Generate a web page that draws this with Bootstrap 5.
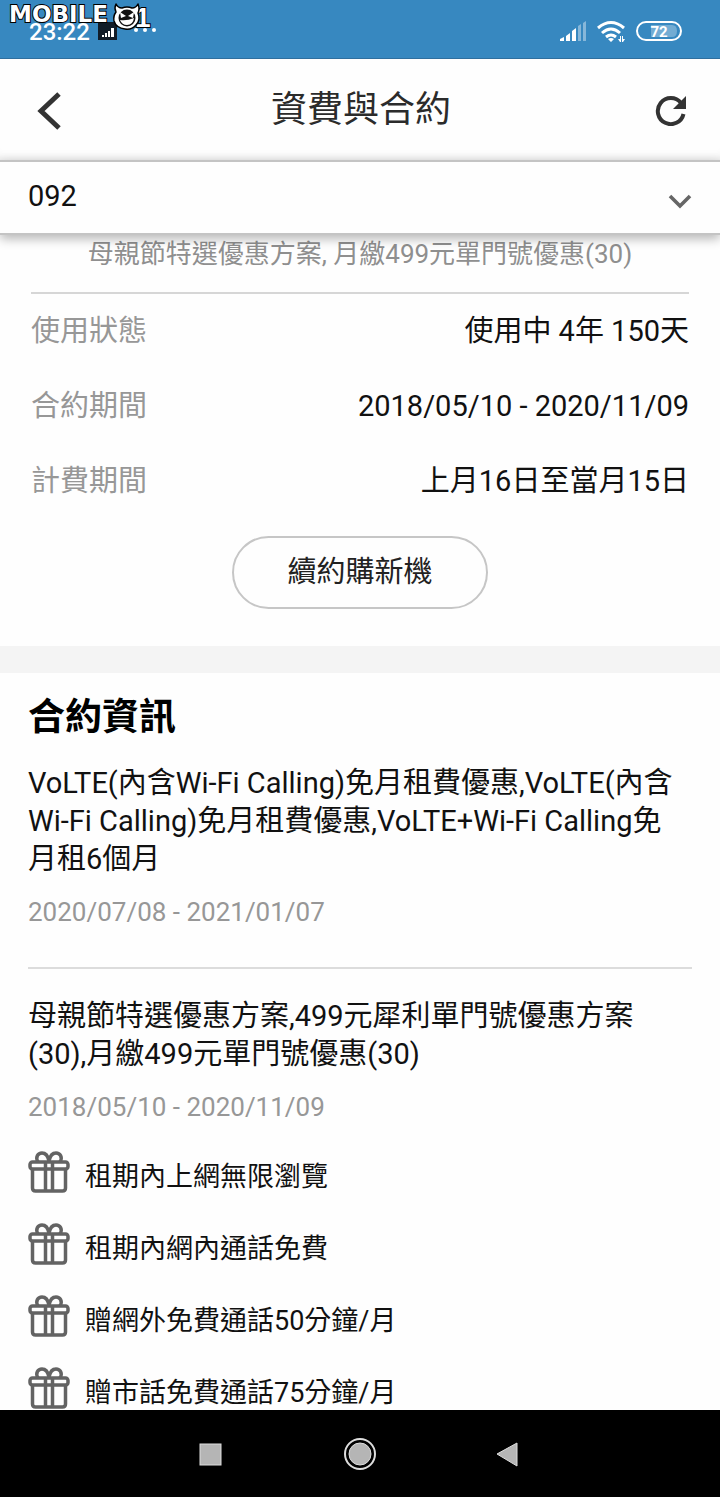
<!DOCTYPE html>
<html lang="zh-Hant">
<head>
<meta charset="utf-8">
<meta name="viewport" content="width=device-width, initial-scale=1">
<title>資費與合約</title>
<link href="https://cdn.jsdelivr.net/npm/bootstrap@5.3.0/dist/css/bootstrap.min.css" rel="stylesheet">
<style>
body { font-family: Roboto, "Noto Sans CJK TC", sans-serif; font-size: 29px; line-height: 38px; color: #111; background: #fefefe; }
svg { display: block; flex: none; }
.status-bar { height: 59px; background: #3788c0; border-bottom: 1px solid #2f6f9e; color: #fff; padding: 4px 38px 0 29px; }
.clock { font-size: 24px; line-height: 24px; font-weight: 500; padding-top: 2px; }
.watermark { top: 0; left: 8px; }
.title-bar { height: 101px; padding: 0 32px; box-shadow: inset 0 -10px 10px -8px #e8e8e8; }
.title-bar h1 { font-size: 36px; line-height: 54px; color: #2b2b2b; }
.line-select { height: 75px; padding: 0 28px 4px; border: solid #c4c4c4; border-width: 2px 0; font-size: 29px; line-height: 38px; color: #111; background: #fefefe url("data:image/svg+xml,%3Csvg xmlns='http://www.w3.org/2000/svg' viewBox='0 0 24 16'%3E%3Cpath d='M2 3l10 10L22 3' fill='none' stroke='%23666' stroke-width='3.6'/%3E%3C/svg%3E") no-repeat right 28px top 31px / 24px 16px; box-shadow: 0 4px 10px rgba(0,0,0,.28); }
.usage { padding: 0 31px 37px; }
.plan-name { font-size: 26px; color: #8f8f8f; padding-bottom: 19px; border-bottom: 2px solid #d6d6d6; }
.usage dl { padding-top: 18px; }
.usage dl > div { padding-bottom: 37px; }
.usage dl > div:last-child { padding-bottom: 36px; }
.usage dt { color: #979797; font-weight: 400; }
.renew { width: 256px; height: 73px; font-size: 29px; color: #222; border: 2px solid #c6c6c6; }
.band { height: 27px; background: #f4f4f4; }
.contracts { padding: 18px 28px 0; }
.contracts h2 { font-size: 37px; line-height: 54px; font-weight: 700; color: #000; margin-bottom: 19px; }
.contract-name { padding-right: 8px; }
.period { font-size: 26px; color: #979797; padding-top: 15px; }
.contract + .contract { border-top: 2px solid #dcdcdc; margin-top: 36px; padding-top: 28px; }
.perk { font-size: 27px; line-height: 34px; padding-bottom: 38px; gap: 15px; }
.perks { padding-top: 34px; }
.perks .perk:last-child { padding-bottom: 0; }
.nav-keys { height: 87px; background: #000; }
.nav-keys .btn { line-height: 1; }
</style>
</head>
<body class="d-flex flex-column min-vh-100">
<svg class="d-none" aria-hidden="true">
  <symbol id="gift" viewBox="0 0 42 42"><g fill="none" stroke="#636363" stroke-width="3.500"><rect x="2" y="11" width="38" height="7" rx="2.500"/><path d="M4.500 18v19q0 3 3 3h27q3 0 3-3V18M17.500 11v29M24.500 11v29"/><path d="M10 11C7 6 10 2 14 2c4 0 6 3 7 8 1-5 3-8 7-8 4 0 7 4 4 9"/></g></symbol>
</svg>

<header>
  <div class="status-bar position-relative d-flex align-items-center justify-content-between">
    <div class="d-flex align-items-center gap-2">
      <span class="clock">23:22</span>
      <svg width="60" height="20" viewBox="0 0 60 20"><rect y="1" width="19" height="18" fill="#111c28"/><path d="M4 16v-2h2v2zM7 16v-4h2v4zM10 16v-6h2v6zM13 16V7h3v9z" fill="#fff"/><g fill="#fff"><circle cx="38" cy="9" r="2"/><circle cx="47" cy="9" r="2"/><circle cx="56" cy="9" r="2"/></g></svg>
    </div>
    <svg class="watermark position-absolute" width="145" height="34" viewBox="0 0 145 34">
      <g font-family="DejaVu Sans" font-weight="700" fill="#fff" stroke="#000" stroke-width="2" paint-order="stroke"><text x="1" y="22" font-size="23">MOBILE</text><text x="127" y="27" font-size="28" font-family="Liberation Sans">1</text></g>
      <path d="M108 4q2 4 6 4 5-2 10 0 4 0 6-4 2 5 0 9 3 7-2 12-4 5-11 4-9-1-11-8-1-5 2-9-2-4 0-8z" fill="#fff" stroke="#000" stroke-width="1.500" stroke-linejoin="round"/><circle cx="119" cy="18" r="8.500" fill="#111"/><path d="M112 12l6 4-5 2zM126 12l-6 4 5 2zM112 20q7 1 14-2-1 7-7 7-5 0-7-5z" fill="#fff"/>
    </svg>
    <div class="d-flex align-items-center">
      <svg width="123" height="24" viewBox="0 0 123 24"><g fill="#fff"><path d="M1 22v-2l4-2v4zM7 22v-5l4-3v8zM13 22V12l4-3v13z"/><path d="M19 22V7l3-2v17zM24 22V4l3-2v20z" opacity=".4"/></g>
        <g fill="none" stroke="#fff" stroke-width="3"><path d="M39 9q13-11 26 0M43 14q9-8 18 0M47 18q5-4 10 0"/></g><path d="M49 20q3-2 6 0l-3 3zM59 20h2v-3h1v6h-1zM63 17h1v3h2l-2 3h-1z" fill="#fff"/>
        <rect x="78" y="3" width="44" height="18" rx="9" fill="none" stroke="#fff" stroke-width="2"/><path d="M92 6h21q5 0 5 6t-5 6H92z" fill="#fff" opacity=".3"/><text x="100" y="18" text-anchor="middle" fill="#fff" font-size="15" font-weight="700">72</text></svg>
    </div>
  </div>
  <div class="title-bar d-flex align-items-center justify-content-between">
    <button type="button" class="btn p-0 border-0" aria-label="返回"><svg width="36" height="40" viewBox="0 0 36 40"><path d="M27 4L9 21l18 17" fill="none" stroke="#333" stroke-width="5"/></svg></button>
    <h1 class="m-0 fw-normal">資費與合約</h1>
    <button type="button" class="btn p-0 border-0" aria-label="重新整理"><svg width="34" height="32" viewBox="0 0 34 32"><path d="M29.500 20A13 13 0 1 1 27 9" fill="none" stroke="#333" stroke-width="4"/><path d="M32 2v13H19z" fill="#333"/></svg></button>
  </div>
  <select class="line-select form-select rounded-0 position-relative" aria-label="門號"><option>092</option></select>
</header>

<main>
  <section class="usage">
    <p class="plan-name text-center m-0">母親節特選優惠方案, 月繳499元單門號優惠(30)</p>
    <dl class="m-0">
      <div class="d-flex justify-content-between"><dt>使用狀態</dt><dd class="m-0">使用中 4年 150天</dd></div>
      <div class="d-flex justify-content-between"><dt>合約期間</dt><dd class="m-0">2018/05/10 - 2020/11/09</dd></div>
      <div class="d-flex justify-content-between"><dt>計費期間</dt><dd class="m-0">上月16日至當月15日</dd></div>
    </dl>
    <button type="button" class="renew btn rounded-pill d-block mx-auto p-0">續約購新機</button>
  </section>
  <div class="band"></div>
  <section class="contracts">
    <h2>合約資訊</h2>
    <article class="contract">
      <p class="contract-name m-0">VoLTE(內含Wi-Fi Calling)免月租費優惠,VoLTE(內含Wi-Fi Calling)免月租費優惠,VoLTE+Wi-Fi Calling免月租6個月</p>
      <p class="period m-0">2020/07/08 - 2021/01/07</p>
    </article>
    <article class="contract">
      <p class="contract-name m-0">母親節特選優惠方案,499元犀利單門號優惠方案(30),月繳499元單門號優惠(30)</p>
      <p class="period m-0">2018/05/10 - 2020/11/09</p>
      <ul class="perks list-unstyled m-0">
        <li class="perk d-flex"><svg width="42" height="34" overflow="visible"><use href="#gift" width="42" height="42" y="-9"/></svg><span>租期內上網無限瀏覽</span></li>
        <li class="perk d-flex"><svg width="42" height="34" overflow="visible"><use href="#gift" width="42" height="42" y="-9"/></svg><span>租期內網內通話免費</span></li>
        <li class="perk d-flex"><svg width="42" height="34" overflow="visible"><use href="#gift" width="42" height="42" y="-9"/></svg><span>贈網外免費通話50分鐘/月</span></li>
        <li class="perk d-flex"><svg width="42" height="34" overflow="visible"><use href="#gift" width="42" height="42" y="-9"/></svg><span>贈市話免費通話75分鐘/月</span></li>
      </ul>
    </article>
  </section>
</main>

<nav class="nav-keys d-flex flex-shrink-0 align-items-center justify-content-center mt-auto" aria-label="系統導覽">
  <div class="row w-100 g-0 justify-content-center">
    <div class="col-auto"><button type="button" class="btn px-5 border-0" aria-label="最近"><svg width="54" height="34" viewBox="0 0 54 34"><rect x="17" y="7" width="21" height="21" fill="#b5b5b5" stroke="#ddd"/></svg></button></div>
    <div class="col-auto"><button type="button" class="btn px-5 border-0" aria-label="主畫面"><svg width="54" height="34" viewBox="0 0 54 34"><circle cx="27" cy="17" r="15" fill="none" stroke="#ddd" stroke-width="2"/><circle cx="27" cy="17" r="11" fill="#b5b5b5" stroke="#ddd"/></svg></button></div>
    <div class="col-auto"><button type="button" class="btn px-5 border-0" aria-label="返回上一頁"><svg width="54" height="34" viewBox="0 0 54 34"><path d="M34 6v23L14 17z" fill="#b5b5b5" stroke="#ddd"/></svg></button></div>
  </div>
</nav>
<script src="https://cdn.jsdelivr.net/npm/bootstrap@5.3.0/dist/js/bootstrap.bundle.min.js"></script>
</body>
</html>
